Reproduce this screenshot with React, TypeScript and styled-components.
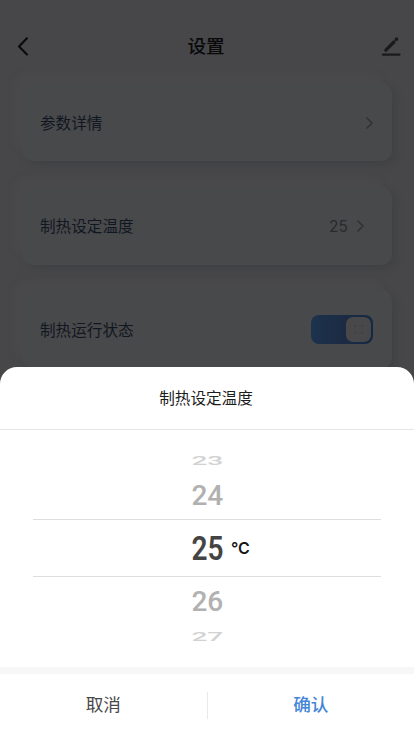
import React from "react";
import styled, { createGlobalStyle } from "styled-components";

const Global = createGlobalStyle`
  * { box-sizing: border-box; }
  body { margin: 0; background: #474749; font-family: "Liberation Sans", "Noto Sans CJK SC", sans-serif; }
  button { border: 0; padding: 0; background: none; font-family: inherit; }
`;

const Screen = styled.div`
  height: 736px;
  overflow: hidden;
  position: relative;
  background: #474749;
`;

const Header = styled.header`
  height: 83px;
  padding: 11px 13px 0 15px;
  display: grid;
  grid-template-columns: 20px 1fr 20px;
  align-items: center;
  h1 {
    margin: 0 4px 4px 0;
    text-align: center;
    font-size: 18.6px;
    line-height: 24px;
    font-weight: 500;
    font-family: "Noto Sans CJK SC", sans-serif;
    color: #09090a;
  }
  svg { display: block; margin-bottom: 2px; }
`;

const Settings = styled.main`
  padding: 0 22px;
  display: grid;
  grid-auto-rows: 78px;
  row-gap: 25.7px;
`;

const Card = styled.section`
  display: flex;
  align-items: center;
  padding: 1px 18px 0;
  border-radius: 10px;
  background: #48494a;
  box-shadow: -9px -10px 4px #49494b, 4px 4px 6px #414244;
`;

const Label = styled.span`
  flex: 1;
  font-family: "Noto Sans CJK SC", sans-serif;
  font-size: 15.6px;
  line-height: 22px;
  color: #111722;
  margin-bottom: 2px;
`;

const Value = styled.span`
  font-family: Inter, sans-serif;
  font-size: 15.5px;
  line-height: 20px;
  color: #292a2b;
  margin: 1px 9px 0 0;
`;

const Chevron = styled.svg<{ $end: number }>`
  margin-right: ${(p) => p.$end}px;
`;

const Toggle = styled.div`
  width: 62px;
  height: 29px;
  padding: 2px;
  border-radius: 8px;
  display: flex;
  justify-content: flex-end;
  background: linear-gradient(90deg, #1c324d, #1c2b43 55%, #142945);
  margin-right: 1px;
`;

const Thumb = styled.div`
  width: 25px;
  height: 25px;
  border-radius: 7px;
  background: #48484a;
  display: grid;
  grid-template-columns: 2px 2px;
  grid-auto-rows: 2px;
  gap: 5px;
  place-content: center;
  i { border-radius: 50%; background: #3f3f44; }
`;

const Sheet = styled.section`
  position: absolute;
  left: 0;
  right: 0;
  bottom: 0;
  height: 369px;
  border-radius: 17px 17px 0 0;
  background: #fff;
  display: flex;
  flex-direction: column;
`;

const SheetTitle = styled.div`
  height: 63px;
  padding: 0 2px 2px 0;
  border-bottom: 1px solid #e5e5e6;
  display: flex;
  align-items: center;
  justify-content: center;
  font-family: "Noto Sans CJK SC", sans-serif;
  font-size: 15.6px;
  color: #1c1c1c;
`;

const Picker = styled.div`
  height: 238px;
  padding: 17px 33px 0;
  display: grid;
  grid-template-rows: 28px 44px 58px 48px 22px;
`;

const Option = styled.div<{ $selected?: boolean }>`
  display: flex;
  align-items: center;
  justify-content: center;
  position: relative;
  ${(p) => p.$selected && "border-top: 1px solid #dedede; border-bottom: 1px solid #dedede;"}
`;

const Digits = styled.span<{ $y: number; $color: string; $heavy?: boolean; $shift?: number }>`
  font-family: Roboto, sans-serif;
  font-weight: ${(p) => (p.$heavy ? 600 : 500)};
  font-size: 34px;
  line-height: 34px;
  color: ${(p) => p.$color};
  transform: translateY(${(p) => p.$shift ?? 0}px) scale(0.825, ${(p) => p.$y});
`;

const Unit = styled.span`
  position: absolute;
  left: 198px;
  top: 18px;
  font-family: Inter, sans-serif;
  font-weight: 600;
  font-size: 16px;
  line-height: 20px;
  color: #171717;
`;

const Actions = styled.div`
  height: 69px;
  border-top: 7px solid #f7f7f7;
  display: grid;
  grid-template-columns: 1fr 1px 1fr;
  align-items: center;
`;

const Divider = styled.i`
  height: 27px;
  background: #e9e9ea;
`;

const Action = styled.button<{ $primary?: boolean }>`
  height: 60px;
  padding: 0 0 3px 0;
  font-family: "Noto Sans CJK SC", sans-serif;
  font-size: 17.6px;
  font-weight: ${(p) => (p.$primary ? 500 : 400)};
  color: ${(p) => (p.$primary ? "#4385d6" : "#484848")};
`;

const Arrow = ({ end }: { end: number }) => (
  <Chevron $end={end} width="8" height="12" viewBox="0 0 8 12" fill="none" stroke="#303132" strokeWidth="1.5" strokeLinecap="round" strokeLinejoin="round">
    <path d="M1 1l5 5-5 5" />
  </Chevron>
);

const options = [
  { n: 23, y: 0.4, color: "#d2d2d2", shift: -0.5 },
  { n: 24, y: 0.82, color: "#b1b1b1", shift: -1.5 },
  { n: 25, y: 1, color: "#444", shift: 0 },
  { n: 26, y: 0.82, color: "#b1b1b1", shift: 0 },
  { n: 27, y: 0.4, color: "#d2d2d2", shift: 0 },
];

export default function App() {
  return (
    <>
      <Global />
      <Screen>
        <Header>
          <svg width="20" height="20" viewBox="0 0 20 20" fill="none" stroke="#09090a" strokeWidth="2" strokeLinecap="round" strokeLinejoin="round">
            <path d="M12 2.3L4 10.5l8 8" />
          </svg>
          <h1>设置</h1>
          <svg width="20" height="20" viewBox="0 0 20 20" fill="none" stroke="#1a1a1b" strokeLinecap="round">
            <path d="M4.8 14.2L13 6" strokeWidth="3.2" />
            <path d="M15.4 3.2l.1-.1" strokeWidth="3.6" />
            <path d="M1.8 18.6h16.7" strokeWidth="2.2" />
          </svg>
        </Header>
        <Settings>
          <Card><Label>参数详情</Label><Arrow end={0} /></Card>
          <Card><Label>制热设定温度</Label><Value>25</Value><Arrow end={9} /></Card>
          <Card>
            <Label>制热运行状态</Label>
            <Toggle><Thumb><i /><i /><i /><i /></Thumb></Toggle>
          </Card>
        </Settings>
        <Sheet>
          <SheetTitle>制热设定温度</SheetTitle>
          <Picker>
            {options.map((o) => (
              <Option key={o.n} $selected={o.n === 25}>
                <Digits $y={o.y} $color={o.color} $heavy={o.n === 25} $shift={o.shift}>{o.n}</Digits>
                {o.n === 25 && <Unit>°C</Unit>}
              </Option>
            ))}
          </Picker>
          <Actions>
            <Action>取消</Action>
            <Divider />
            <Action $primary>确认</Action>
          </Actions>
        </Sheet>
      </Screen>
    </>
  );
}
